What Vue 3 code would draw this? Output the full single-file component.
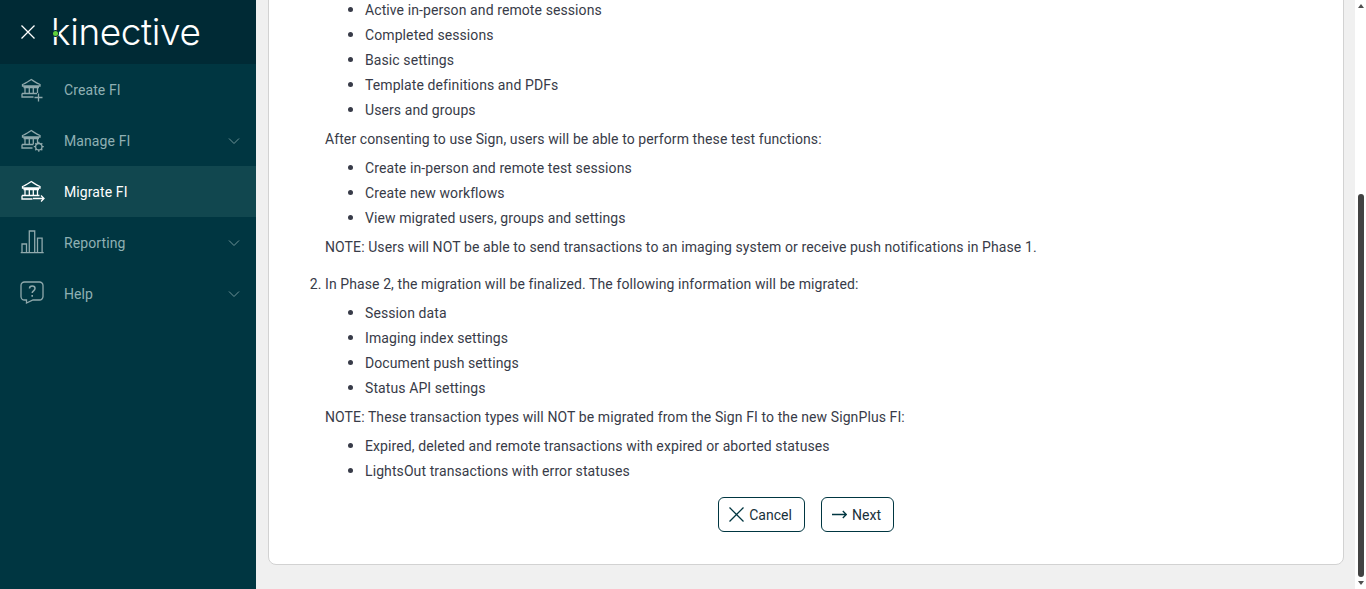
<script setup>
const nav = [
  { label: 'Create FI', icon: 'create' },
  { label: 'Manage FI', icon: 'manage', chevron: true },
  { label: 'Migrate FI', icon: 'migrate', active: true },
  { label: 'Reporting', icon: 'report', chevron: true },
  { label: 'Help', icon: 'help', chevron: true },
]
const blocks = [
  { type: 'ul', items: ['Active in-person and remote sessions', 'Completed sessions', 'Basic settings', 'Template definitions and PDFs', 'Users and groups'] },
  { type: 'p', text: 'After consenting to use Sign, users will be able to perform these test functions:' },
  { type: 'ul', items: ['Create in-person and remote test sessions', 'Create new workflows', 'View migrated users, groups and settings'] },
  { type: 'p', text: 'NOTE: Users will NOT be able to send transactions to an imaging system or receive push notifications in Phase 1.' },
]
const blocks2 = [
  { type: 'ul', items: ['Session data', 'Imaging index settings', 'Document push settings', 'Status API settings'] },
  { type: 'p', text: 'NOTE: These transaction types will NOT be migrated from the Sign FI to the new SignPlus FI:' },
  { type: 'ul', items: ['Expired, deleted and remote transactions with expired or aborted statuses', 'LightsOut transactions with error statuses'] },
]
</script>

<template>
  <div class="app">
    <aside class="side">
      <header class="brand">
        <svg class="close" viewBox="0 0 16 16" width="16" height="16"><path d="M1.5 1.5l13 13M14.5 1.5l-13 13" /></svg>
        <div class="logo"><span class="logo-text">kinective</span><i class="logo-dot"></i></div>
      </header>
      <nav>
        <a v-for="n in nav" :key="n.label" class="item" :class="{ active: n.active }">
          <svg class="ico" viewBox="0 0 26 26" width="26" height="26">
            <template v-if="n.icon === 'create' || n.icon === 'manage' || n.icon === 'migrate'">
              <path d="M3.500 7.500C6 6.500 9 4.500 12.200 2.500 15.400 4.500 18.400 6.500 21 7.500V9H3.500zM4.500 10.500h15.500M6 10.500V16M10.300 10.500V16M14.300 10.500V16M18.500 10.500V16" />
              <path v-if="n.icon === 'create'" d="M3 16.500h15M3 16.500V20h11.500M19.500 16.500v8M15.500 20.500h8" />
              <path v-if="n.icon === 'manage'" d="M3 16.500h11.500M3 16.500V20h10.500" />
              <circle v-if="n.icon === 'manage'" cx="19.800" cy="18.700" r="3.200" />
              <path v-if="n.icon === 'manage'" d="M19.800 13.700v1.800M19.800 21.900v1.800M14.800 18.700h1.800M23 18.700h1.800M16.300 15.200l1.200 1.200M22.100 21l1.200 1.200M23.300 15.200l-1.200 1.200M17.500 21l-1.200 1.200" />
              <path v-if="n.icon === 'migrate'" d="M3 16.500h17.500M3 16.500V20h10.500M14 19.500h11M22 16.500l3 3-3 3" />
            </template>
            <template v-else-if="n.icon === 'report'">
              <path d="M1.700 22.700h23M3 22.500v-8.500h4.500v8.500M10.300 22.500V1h5.400v21.500M18.500 22.500V8.200h4.600v14.300" />
            </template>
            <template v-else>
              <path d="M5.500 1h15A3.500 3.500 0 0 1 24 4.500v11a3.500 3.500 0 0 1-3.500 3.500H14l-6.500 3v-3h-2A3.500 3.500 0 0 1 2 15.500v-11A3.500 3.500 0 0 1 5.500 1z" />
              <path d="M10.500 7.500c0-3.400 5.500-3.400 5.500 0 0 2.300-2.800 2.300-2.800 4.500" stroke-width="1.500" />
              <path d="M13.200 14v1.800" stroke-width="1.600" />
            </template>
          </svg>
          <span class="label">{{ n.label }}</span>
          <svg v-if="n.chevron" class="chev" viewBox="0 0 12 8" width="12" height="8"><path d="M1 1.500l5 5 5-5" /></svg>
        </a>
      </nav>
    </aside>
    <main class="main">
      <section class="card">
        <ol class="steps">
          <li class="step first">
            <template v-for="(b, i) in blocks" :key="i">
              <ul v-if="b.type === 'ul'"><li v-for="t in b.items" :key="t">{{ t }}</li></ul>
              <p v-else>{{ b.text }}</p>
            </template>
          </li>
          <li class="step second">
            <p class="lead">In Phase 2, the migration will be finalized. The following information will be migrated:</p>
            <template v-for="(b, i) in blocks2" :key="i">
              <ul v-if="b.type === 'ul'"><li v-for="t in b.items" :key="t">{{ t }}</li></ul>
              <p v-else>{{ b.text }}</p>
            </template>
          </li>
        </ol>
        <div class="actions">
          <button class="btn">
            <svg viewBox="0 0 15 15" width="15" height="15"><path d="M.5.500l14 14M14.500.500l-14 14" /></svg>
            Cancel
          </button>
          <button class="btn next">
            <svg viewBox="0 0 15 9" width="15" height="9"><path d="M0 4.500h14.300M10.800 1l3.500 3.500L10.800 8" /></svg>
            Next
          </button>
        </div>
      </section>
    </main>
    <div class="scrollbar">
      <span class="arrow up"></span>
      <div class="track"><span class="thumb"></span></div>
      <span class="arrow down"></span>
    </div>
  </div>
</template>

<style scoped>
.app {
  display: flex;
  height: 589px;
  overflow: hidden;
  font-family: Roboto, "Liberation Sans", sans-serif;
  background: #f0f0f0;
}
.side {
  width: 256px;
  flex: none;
  background: #003641;
}
.brand {
  height: 64px;
  background: #002a35;
  display: flex;
  align-items: center;
  padding-left: 20px;
  gap: 17px;
}
.close { fill: none; stroke: #fff; stroke-width: 1.3; }
.logo { position: relative; height: 40px; width: 150px; }
.logo-text {
  display: block;
  font-family: Inter, sans-serif;
  font-weight: 350;
  font-size: 37px;
  line-height: 40px;
  letter-spacing: -.4px;
  margin-left: -2px;
  color: #fff;
}
.logo-dot {
  position: absolute;
  left: 0;
  top: 19px;
  width: 5px;
  height: 5px;
  border-radius: 50%;
  background: #5fd03c;
  box-shadow: 0 0 0 1px #002a35;
}
.item {
  display: flex;
  align-items: center;
  height: 51px;
  padding-left: 19px;
  color: #8fb0b3;
  font-size: 14px;
  letter-spacing: .1px;
}
.item.active { background: #11474f; color: #fff; }
.ico { fill: none; stroke: #8fa9ac; stroke-width: 1.3; flex: none; }
.active .ico { stroke: #fff; }
.label { margin-left: 19px; flex: 1; }
.chev { fill: none; stroke: #6f9397; stroke-width: 1; margin-right: 16px; }
.main {
  flex: 1;
  min-width: 0;
  padding: 0 12px 24px;
  display: flex;
  flex-direction: column;
  justify-content: flex-end;
}
.card {
  background: #fff;
  border: 1px solid #d2d2d2;
  border-radius: 8px;
  padding: 0 0 32px;
  color: #383b48;
  font-size: 14px;
  line-height: 21px;
  letter-spacing: .095px;
  flex: none;
}
.steps { margin: 0; padding: 0 0 0 56px; }
.first { list-style: none; }
.second { margin-top: 16px; }
.step p { margin: 0; }
ul { margin: 8px 0; padding: 0 0 0 40px; list-style: none; }
ul li { position: relative; margin-bottom: 4px; }
ul li::before {
  content: "";
  position: absolute;
  left: -17.500px;
  top: 7px;
  width: 5px;
  height: 5px;
  border-radius: 50%;
  background: #383b48;
}
ul li:last-child { margin-bottom: 0; }
.actions {
  display: flex;
  justify-content: center;
  gap: 16px;
  margin-top: 15px;
}
.btn {
  display: flex;
  align-items: center;
  justify-content: center;
  width: 87px;
  height: 35px;
  background: #fff;
  border: 1px solid #003641;
  border-radius: 6px;
  color: #17303a;
  font: 14px Roboto, sans-serif;
  gap: 5px;
  padding: 0 2px 0 0;
}
.next { width: 73px; }
.btn svg { fill: none; stroke: #003641; stroke-width: 1.300; }
.scrollbar {
  width: 11px;
  flex: none;
  background: #fff;
  display: flex;
  flex-direction: column;
  align-items: center;
  margin-left: -1px;
}
.arrow { flex: none; width: 0; height: 0; border-left: 3.500px solid transparent; border-right: 3.500px solid transparent; }
.arrow.up { margin-top: 4px; border-bottom: 4px solid #505050; }
.arrow.down { margin-bottom: 4px; border-top: 4px solid #505050; }
.track { flex: 1; width: 100%; display: flex; flex-direction: column; justify-content: flex-end; align-items: center; padding: 4px 0; }
.thumb { width: 6px; height: 383px; background: #424242; border-radius: 3px; }
</style>

<style>
html, body { margin: 0; overflow: hidden; }
</style>
